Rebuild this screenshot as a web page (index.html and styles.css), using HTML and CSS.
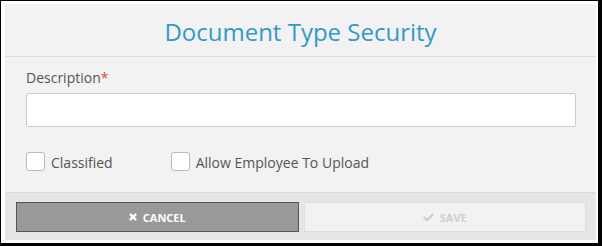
FILE: index.html
```html
<!DOCTYPE html>
<html>
<head>
<meta charset="utf-8">
<link rel="stylesheet" href="styles.css">
</head>
<body>
<div class="frame">
  <div class="modal">
    <div class="header"><h1 class="title">Document Type Security</h1></div>
    <div class="content">
      <label class="label">Description<span class="req">*</span></label>
      <div class="input"></div>
      <div class="checks">
        <div class="check"><span class="box"></span><span class="check-text">Classified</span></div>
        <div class="check second"><span class="box"></span><span class="check-text">Allow Employee To Upload</span></div>
      </div>
    </div>
    <div class="footer">
      <div class="btn cancel">
        <svg class="icon" width="8" height="8" viewBox="0 0 10 10"><path d="M2 2 L8 8 M8 2 L2 8" stroke="#fff" stroke-width="3" stroke-linecap="round"/></svg>
        <span>CANCEL</span>
      </div>
      <div class="btn save">
        <svg class="icon" width="11" height="9" viewBox="0 0 12 10"><path d="M1.5 5 L4.5 8 L10.5 1.8" fill="none" stroke="#cfcfcf" stroke-width="2.6" stroke-linecap="round" stroke-linejoin="round"/></svg>
        <span>SAVE</span>
      </div>
    </div>
  </div>
</div>
</body>
</html>
```
FILE: styles.css
```css
html, body {
  margin: 0;
  padding: 0;
  background: #000;
  width: 602px;
  height: 246px;
  overflow: hidden;
}
.frame {
  padding: 1px 4px 3px 1px;
  height: 242px;
}
.modal {
  border: 4px solid #fff;
  border-right-width: 2px;
  border-bottom-width: 3px;
  border-top-width: 3px;
  background: #f2f2f2;
  height: 236px;
  display: flex;
  flex-direction: column;
  font-family: "Open Sans", "DejaVu Sans", sans-serif;
}
.header {
  height: 53px;
  border-bottom: 1px solid #dcdcdc;
  box-sizing: border-box;
}
.title {
  margin: 0;
  padding-top: 11px;
  font-size: 24px;
  line-height: 33px;
  font-weight: 400;
  color: #3399c9;
  text-align: center;
}
.content {
  flex: 1;
  padding: 11px 20px 0 21px;
}
.label {
  display: block;
  font-size: 14px;
  line-height: 19px;
  color: #555;
}
.req {
  color: #e04848;
}
.input {
  margin-top: 6px;
  height: 32px;
  background: #fff;
  border: 1px solid #ccc;
  border-radius: 2px;
}
.checks {
  display: flex;
  margin-top: 25px;
}
.check {
  display: flex;
  align-items: center;
}
.second {
  margin-left: 58px;
}
.box {
  width: 17px;
  height: 17px;
  background: #fff;
  border: 1px solid #bbb;
  border-radius: 3px;
}
.check-text {
  margin-left: 6px;
  font-size: 14px;
  line-height: 19px;
  color: #555;
  position: relative;
  top: 1px;
}
.footer {
  height: 48px;
  box-sizing: border-box;
  background: #e6e6e6;
  border-top: 1px solid #dadada;
  display: flex;
  gap: 5px;
  padding: 9px 10px 0 11px;
}
.btn {
  flex: 1;
  height: 30px;
  box-sizing: border-box;
  display: flex;
  align-items: center;
  justify-content: center;
  gap: 6px;
  font-size: 11px;
  font-weight: 700;
}
.cancel {
  background: #999;
  border: 1px solid #555;
  color: #fff;
}
.save {
  background: #f2f2f2;
  border: 1px solid #dedede;
  color: #cfcfcf;
}
.icon {
  display: block;
}
```
